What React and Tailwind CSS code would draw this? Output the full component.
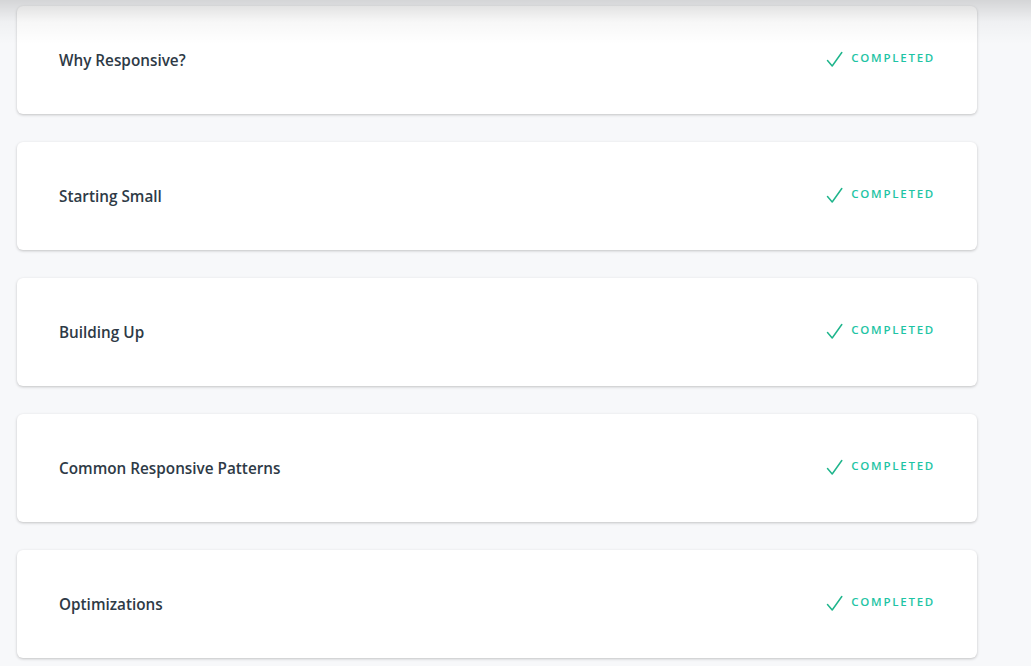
import React from 'react'

const lessons = [
  'Why Responsive?',
  'Starting Small',
  'Building Up',
  'Common Responsive Patterns',
  'Optimizations',
]

function Check() {
  return (
    <svg width="17" height="17" viewBox="0 0 17 17" fill="none" className="shrink-0">
      <path d="M1.5 9.5 L6.2 15 L15.8 1.5" stroke="#1fb58c" strokeWidth="1.5" strokeLinecap="round" strokeLinejoin="round" />
    </svg>
  )
}

export default function App() {
  return (
    <div className="relative w-[1031px] h-[666px] overflow-hidden bg-[#f7f8fa]" style={{ fontFamily: '"Open Sans", "Liberation Sans", sans-serif' }}>
      {/* top shadow from header above */}
      <div className="pointer-events-none absolute inset-x-0 top-0 h-[44px] z-10 bg-gradient-to-b from-[rgba(0,0,0,0.14)] via-[rgba(0,0,0,0.03)] to-transparent" />

      <div className="flex flex-col gap-[28px] pl-[17px] pt-[6px]">
        {lessons.map(title => (
          <div key={title} className="w-[960px] h-[108px] rounded-[6px] bg-white shadow-[0_1px_3px_rgba(0,0,0,0.22)] flex items-center justify-between pl-[42px] pr-[42px]">
            <span className="text-[15.3px] font-semibold text-[#2e3a46]">{title}</span>
            <span className="flex items-center gap-[8px] -mt-[2px]">
              <Check />
              <span className="text-[11.5px] font-semibold tracking-[1.75px] text-[#1ec4a4] -mt-[2px]">COMPLETED</span>
            </span>
          </div>
        ))}
      </div>
    </div>
  )
}
